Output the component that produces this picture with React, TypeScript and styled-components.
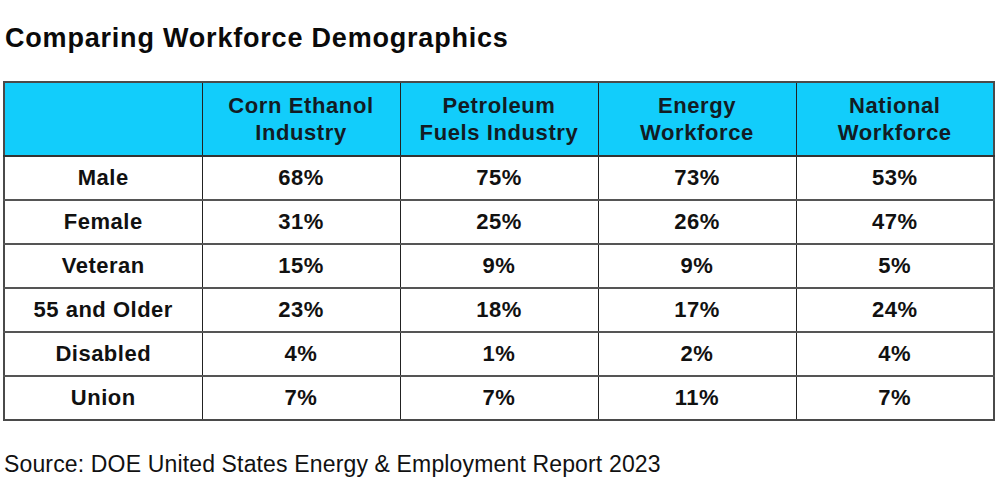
import styled, { createGlobalStyle } from "styled-components";

const GlobalStyle = createGlobalStyle`
  html, body {
    margin: 0;
    padding: 0;
    background: #ffffff;
  }
  body {
    font-family: "Liberation Sans", Arial, sans-serif;
    color: #111111;
  }
`

const Page = styled.div`
  width: 999px;
  height: 501px;
  padding: 22px 4px 0 3px;
  box-sizing: border-box;
  overflow: hidden;
`

const Title = styled.h1`
  margin: 0 0 0 2px;
  font-size: 27px;
  line-height: 32px;
  letter-spacing: 0.8px;
  font-weight: 700;
  color: #0a0a0a;
`

const Table = styled.table`
  margin-top: 27px;
  width: 992px;
  border-collapse: collapse;
  table-layout: fixed;
  border: 2px solid #4a4a4a;
`

const HeadCell = styled.th`
  height: 72px;
  padding: 0;
  background: #12cdfb;
  font-size: 22px;
  line-height: 27px;
  letter-spacing: 0.6px;
  font-weight: 700;
  color: #121c24;
  text-align: center;
  vertical-align: middle;
  border: 1px solid #222;
  border-bottom: 2px solid #333;
`

const Cell = styled.td`
  height: 42px;
  padding: 0;
  font-size: 22px;
  letter-spacing: 0.5px;
  font-weight: 700;
  color: #111;
  text-align: center;
  vertical-align: middle;
  border-left: 1px solid #222;
  border-right: 1px solid #222;
  border-top: 2px solid #555;
`

const Source = styled.p`
  margin: 30px 0 0 1px;
  font-size: 23px;
  line-height: 26px;
  letter-spacing: 0.15px;
  color: #111;
`

const columns = [
  ["Corn Ethanol", "Industry"],
  ["Petroleum", "Fuels Industry"],
  ["Energy", "Workforce"],
  ["National", "Workforce"],
]

const rows: [string, string[]][] = [
  ["Male", ["68%", "75%", "73%", "53%"]],
  ["Female", ["31%", "25%", "26%", "47%"]],
  ["Veteran", ["15%", "9%", "9%", "5%"]],
  ["55 and Older", ["23%", "18%", "17%", "24%"]],
  ["Disabled", ["4%", "1%", "2%", "4%"]],
  ["Union", ["7%", "7%", "11%", "7%"]],
]

export default function App() {
  return (
    <Page>
      <GlobalStyle />
      <Title>Comparing Workforce Demographics</Title>
      <Table>
        <thead>
          <tr>
            <HeadCell />
            {columns.map(([a, b]) => (
              <HeadCell key={a}>
                {a}
                <br />
                {b}
              </HeadCell>
            ))}
          </tr>
        </thead>
        <tbody>
          {rows.map(([label, values]) => (
            <tr key={label}>
              <Cell>{label}</Cell>
              {values.map((v, i) => (
                <Cell key={i}>{v}</Cell>
              ))}
            </tr>
          ))}
        </tbody>
      </Table>
      <Source>Source: DOE United States Energy &amp; Employment Report 2023</Source>
    </Page>
  )
}
